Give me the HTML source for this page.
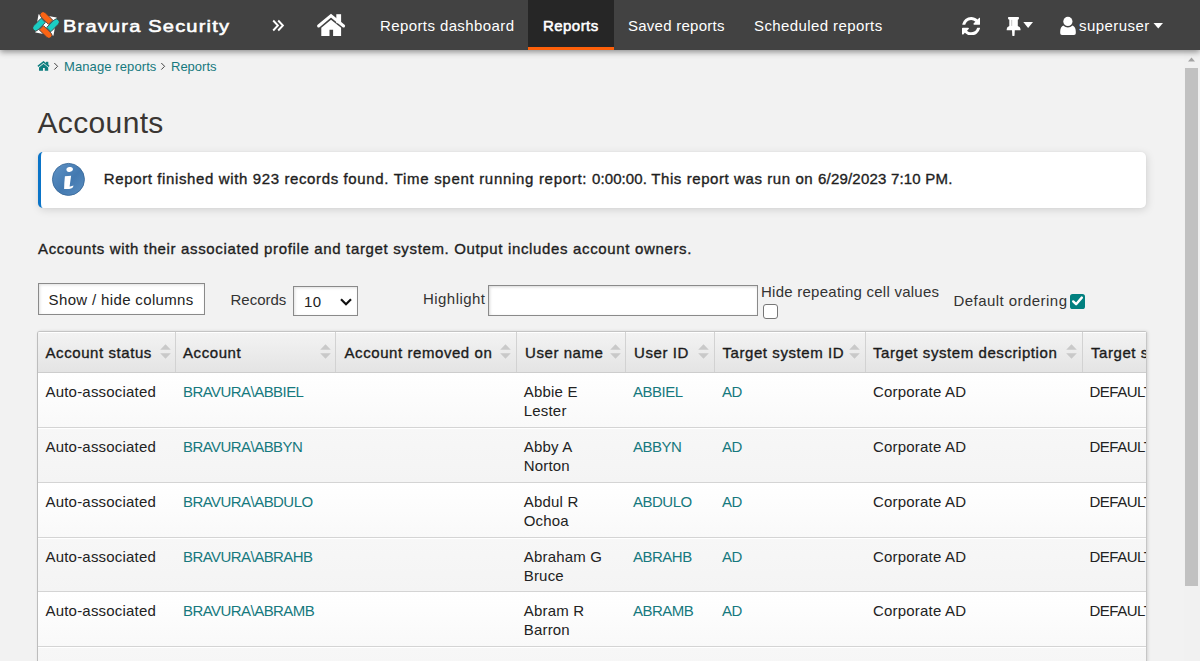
<!DOCTYPE html>
<html><head><meta charset="utf-8">
<style>
*{box-sizing:border-box;}
html,body{margin:0;padding:0;}
body{width:1200px;height:661px;overflow:hidden;position:relative;background:#f2f2f2;font-family:"Liberation Sans",sans-serif;color:#222;}
.a{position:absolute;white-space:nowrap;}
#nav{position:absolute;left:0;top:0;width:1200px;height:50px;background:#424242;box-shadow:0 2px 6px rgba(0,0,0,.42);z-index:5;}
.nt{position:absolute;top:16px;line-height:20px;font-size:15px;color:#fff;letter-spacing:.4px;white-space:nowrap;}
#act{position:absolute;left:528px;top:0;width:86px;height:50px;background:#262626;border-bottom:3px solid #fc600a;}
.t15{font-size:15px;line-height:20px;}
.link{color:#16797e;}
#sb{position:absolute;left:1184px;top:50px;width:16px;height:611px;background:#f1f1f1;z-index:3;}
#thumb{position:absolute;left:1px;top:18px;width:13px;height:518px;background:#c1c1c1;}
#tbl{position:absolute;left:37px;top:331px;width:1110px;height:340px;overflow:hidden;border-left:1px solid #bdbdbd;border-right:1px solid #c6c6c6;border-top:1px solid #c4c4c4;border-radius:3px 2px 0 0;box-shadow:1px 0 3px rgba(0,0,0,.12);}
.hd{position:absolute;left:0;top:0;width:1200px;height:41px;background:linear-gradient(#f3f3f3,#e4e4e4);border-bottom:1px solid #cdcdcd;box-shadow:inset 0 1px 0 #fff;}
.ht{position:absolute;top:10.5px;font-size:15px;line-height:20px;color:#1b1b1b;letter-spacing:.57px;-webkit-text-stroke:.35px #1b1b1b;white-space:nowrap;}
.sep{position:absolute;top:0;width:1px;height:40px;background:#d2d2d2;}
.row{position:absolute;left:0;width:1200px;height:55px;border-bottom:1px solid #d4d4d4;}
.odd{background:linear-gradient(#ffffff,#f9f9f9);}
.even{background:linear-gradient(#f7f7f7,#f4f4f4);box-shadow:inset 0 1px 0 #fff;}
.ct{position:absolute;font-size:15px;line-height:19px;color:#222;white-space:nowrap;letter-spacing:.2px;}
.si{position:absolute;top:12px;}
.ct{top:9px;}
.ct.link{color:#16797e;}
.info{top:169px;color:#1e1e1e;-webkit-text-stroke:.35px #1e1e1e;}
</style></head>
<body>
<div id="nav">
  <!-- logo -->
  <svg class="a" style="left:33.3px;top:12.3px" width="26" height="26" viewBox="0 0 26 26">
   <g transform="translate(13 13)">
    <rect x="-9.2" y="-9.2" width="18.4" height="18.4" fill="#fff" transform="rotate(10)"/>
    <g transform="rotate(45)" stroke="#424242" stroke-width="0.9">
     <path fill="#fa6414" d="M1.3 -8.2 H-9.4 A3 3 0 0 0 -9.4 -2.2 H1.3 Z"/>
     <path fill="#fa6414" d="M-1.3 8.2 H9.4 A3 3 0 0 0 9.4 2.2 H-1.3 Z"/>
     <path fill="#1bcdc3" d="M-8.2 -1.3 V9.4 A3 3 0 0 0 -2.2 9.4 V-1.3 Z"/>
     <path fill="#1bcdc3" d="M8.2 1.3 V-9.4 A3 3 0 0 0 2.2 -9.4 V1.3 Z"/>
    </g>
   </g>
  </svg>
  <div class="a" style="left:62.8px;top:15.5px;font-size:17px;line-height:22px;color:#fff;letter-spacing:1px;-webkit-text-stroke:0.55px #fff;transform:scaleX(1.18);transform-origin:0 0;">Bravura Security</div>
  <!-- chevrons -->
  <svg class="a" style="left:270px;top:17px" width="18" height="16" viewBox="0 0 18 16">
    <path d="M3.2 3.5 L7.9 8.5 L3.2 13.5 M8.2 3.5 L12.9 8.5 L8.2 13.5" fill="none" stroke="#fff" stroke-width="1.9"/>
  </svg>
  <!-- home -->
  <svg class="a" style="left:315px;top:12px" width="32" height="26" viewBox="315 12 32 26">
    <rect x="336.3" y="14.2" width="4.8" height="9" fill="#fff"/>
    <path d="M318.6 26 L331 15.7 L343.6 26" fill="none" stroke="#fff" stroke-width="3" stroke-linecap="round"/>
    <path d="M321.3 27.7 L331 19.8 L341.1 27.7 L341.1 36.1 L333.1 36.1 L333.1 29.8 L329.5 29.8 L329.5 36.1 L321.3 36.1 Z" fill="#fff"/>
  </svg>
  <div class="nt" style="left:380px;">Reports dashboard</div>
  <div id="act"></div>
  <div class="nt" style="left:543px;letter-spacing:.45px;-webkit-text-stroke:.55px #fff;">Reports</div>
  <div class="nt" style="left:628px;letter-spacing:.25px;">Saved reports</div>
  <div class="nt" style="left:754px;">Scheduled reports</div>
  <!-- refresh -->
  <svg class="a" style="left:961.7px;top:16.5px" width="18.4" height="18.4" viewBox="0 128 1536 1536" preserveAspectRatio="none"><path fill="#fff" d="M1511 1056q0 5-1 7-64 268-268 434.500t-478 166.500q-146 0-282.500-55t-243.500-157l-129 129q-19 19-45 19t-45-19-19-45v-448q0-26 19-45t45-19h448q26 0 45 19t19 45-19 45l-137 137q71 66 161 102t187 36q134 0 250-65t186-179q11-17 53-117 8-23 30-23h192q13 0 22.500 9.500t9.500 22.500zm25-800v448q0 26-19 45t-45 19h-448q-26 0-45-19t-19-45 19-45l138-138q-148-137-349-137-134 0-250 65t-186 179q-11 17-53 117-8 23-30 23h-199q-13 0-22.500-9.500t-9.500-22.500v-7q65-268 270-434.500t480-166.500q146 0 284 55.500t245 156.500l130-129q19-19 45-19t45 19 19 45z"/></svg>
  <!-- pin -->
  <svg class="a" style="left:1005px;top:15px" width="30" height="23" viewBox="1005 15 30 23">
 <path fill="#fff" d="M1008.6 16.9 H1018.3 Q1019 16.9 1019 18.3 Q1019 19.7 1017.8 19.7 V26 Q1020.5 27 1020.5 29 V30.3 H1014.8 L1014.5 35.8 Q1013.4 36.4 1012.3 35.8 L1012 30.3 H1006.7 V29 Q1006.7 27 1009.3 26 V19.7 Q1008 19.7 1008 18.3 Q1008 16.9 1008.6 16.9 Z"/>
 <rect x="1011.2" y="19.9" width="1" height="6" fill="#424242" opacity=".3"/>
 <path fill="#fff" d="M1023.3 22 H1033 L1028.15 28 Z"/>
</svg>
  <!-- user -->
  <svg class="a" style="left:1059px;top:15px" width="18" height="22" viewBox="1059 15 18 22">
 <circle cx="1067.9" cy="21.4" r="4.6" fill="#fff"/>
 <path fill="#fff" d="M1063.2 25.6 Q1065.5 27.6 1067.9 27.6 Q1070.3 27.6 1072.6 25.6 Q1075.8 27.2 1075.8 31.5 V33.3 Q1075.8 35 1074 35 H1062 Q1060.2 35 1060.2 33.3 V31.5 Q1060.2 27.2 1063.2 25.6 Z"/>
</svg>
<svg class="a" style="left:1152px;top:21px" width="12" height="9" viewBox="1152 21 12 9"><path fill="#fff" d="M1153.5 23 H1163 L1158.25 28.6 Z"/></svg>
  <div class="nt" style="left:1079px;letter-spacing:.45px;">superuser</div>
</div>

<div id="sb"><svg style="position:absolute;left:3px;top:6.8px" width="9" height="6" viewBox="0 0 9 6"><path d="M4.5 0.5 L8 4.5 L1 4.5 Z" fill="#a3a3a3"/></svg><div id="thumb"></div></div>

<!-- breadcrumb -->
<svg class="a" style="left:37px;top:61px" width="13" height="11" viewBox="0 0 13 11"><path d="M0.9 5.4 L6.5 0.9 L12.1 5.4" fill="none" stroke="#0e7f80" stroke-width="1.5"/><rect x="9" y="0.8" width="2.3" height="3.4" fill="#0e7f80"/><path fill="#0e7f80" d="M2 6.4 L6.5 2.7 L11.2 6.4 V9.8 H7.8 V7 H6 V9.8 H2 Z"/></svg>
<svg class="a" style="left:53px;top:62px" width="6" height="9" viewBox="0 0 6 9"><path d="M1.3 1 L4.6 4.3 L1.3 7.6" fill="none" stroke="#3a3a3a" stroke-width="0.95"/></svg>
<svg class="a" style="left:160px;top:62px" width="6" height="9" viewBox="0 0 6 9"><path d="M1.3 1 L4.6 4.3 L1.3 7.6" fill="none" stroke="#3a3a3a" stroke-width="0.95"/></svg>

<div class="a link" style="left:64px;top:57.7px;font-size:13px;line-height:18px;letter-spacing:.1px;">Manage reports</div>
<div class="a link" style="left:171px;top:57.7px;font-size:13px;line-height:18px;">Reports</div>

<div class="a" style="left:37.5px;top:105px;font-size:30px;line-height:36px;color:#3a3633;letter-spacing:.35px;">Accounts</div>

<div class="a" style="left:38px;top:152px;width:1108px;height:56px;background:#fff;border-left:3px solid #0a74c8;border-radius:5px;box-shadow:1px 2px 8px rgba(0,0,0,.13),0 0 2px rgba(0,0,0,.06);"></div>
<svg class="a" style="left:51px;top:162px" width="35" height="35" viewBox="51 162 35 35">
 <defs><linearGradient id="ig" x1="0" y1="0" x2="1" y2="1"><stop offset="0" stop-color="#5f93c6"/><stop offset=".55" stop-color="#4379b0"/><stop offset="1" stop-color="#5b8fc2"/></linearGradient></defs>
 <circle cx="68.45" cy="179.4" r="16" fill="url(#ig)" stroke="#3a6a9a" stroke-width="0.9"/>
 <ellipse cx="69.7" cy="169.4" rx="3.3" ry="2.4" fill="#fff" transform="rotate(-15 69.8 169.5)"/>
 <path fill="#fff" d="M64.9 176.3 L71.1 175.7 L69.6 186.4 Q71.7 186.6 73.5 185.6 Q73 188.7 69.2 189 L64.1 189 Q64.2 183 64.9 176.3 Z"/>
</svg>
<div class="a t15 info" style="left:103.8px;letter-spacing:0.62px;">Report finished with 923 records found.</div>
<div class="a t15 info" style="left:393.75px;letter-spacing:0.693px;">Time spent running report:</div>
<div class="a t15 info" style="left:592px;letter-spacing:0.101px;">0:00:00.</div>
<div class="a t15 info" style="left:651.3px;letter-spacing:0.578px;">This report was run on</div>
<div class="a t15 info" style="left:818px;letter-spacing:0.198px;">6/29/2023 7:10 PM.</div>

<div class="a t15" style="left:38px;top:239px;color:#1e1e1e;letter-spacing:.65px;-webkit-text-stroke:.35px #1e1e1e;">Accounts with their associated profile and target system. Output includes account owners.</div>


<!-- controls -->
<div class="a" style="left:38px;top:283px;width:167px;height:32px;background:#fff;border:1px solid #8a8a8a;box-shadow:inset 1px 1px 3px rgba(0,0,0,.12);"></div>
<div class="a t15" style="left:48.6px;top:290px;color:#222;letter-spacing:.35px;">Show / hide columns</div>
<div class="a t15" style="left:230.5px;top:290px;color:#333;">Records</div>
<div class="a" style="left:293px;top:286px;width:65px;height:30px;background:#fff;border:1px solid #8a8a8a;box-shadow:inset 1px 1px 3px rgba(0,0,0,.12);"></div>
<div class="a t15" style="left:304px;top:291.5px;color:#222;letter-spacing:.5px;">10</div>
<svg class="a" style="left:339px;top:296.7px" width="14" height="10" viewBox="0 0 14 10"><path d="M2 2.2 L7 7.2 L12 2.2" fill="none" stroke="#111" stroke-width="2.2"/></svg>
<div class="a t15" style="left:423px;top:289px;color:#333;letter-spacing:.45px;">Highlight</div>
<div class="a" style="left:488px;top:285px;width:270px;height:31px;background:#fff;border:1px solid #8a8a8a;box-shadow:inset 1px 1px 3px rgba(0,0,0,.16);"></div>
<div class="a t15" style="left:761px;top:282.3px;color:#333;letter-spacing:.25px;">Hide repeating cell values</div>
<div class="a" style="left:763px;top:304px;width:15px;height:14.5px;background:#fff;border:1px solid #767676;border-radius:3px;"></div>
<div class="a t15" style="left:953.5px;top:291.3px;color:#333;letter-spacing:.45px;">Default ordering</div>
<svg class="a" style="left:1069.8px;top:293.9px" width="15" height="15" viewBox="0 0 15 15"><rect x="0" y="0" width="15" height="15" rx="2.6" fill="#02807f"/><path d="M3.2 7.4 L6.1 10.2 L11.8 3.6" fill="none" stroke="#fff" stroke-width="2.4" stroke-linecap="round" stroke-linejoin="round"/></svg>

<div id="tbl">
<div class="hd">
<div class="ht" style="left:7.5px">Account status</div>
<svg class="si" style="left:121.5px" width="11" height="15" viewBox="0 0 11 15"><path d="M5.5 0.3 L10.8 5.8 L0.2 5.8 Z M5.5 14.7 L10.8 9.2 L0.2 9.2 Z" fill="#c9c9c9"/></svg>
<div class="sep" style="left:137.0px"></div>
<div class="ht" style="left:145.0px">Account</div>
<svg class="si" style="left:281.5px" width="11" height="15" viewBox="0 0 11 15"><path d="M5.5 0.3 L10.8 5.8 L0.2 5.8 Z M5.5 14.7 L10.8 9.2 L0.2 9.2 Z" fill="#c9c9c9"/></svg>
<div class="sep" style="left:297.0px"></div>
<div class="ht" style="left:306.5px">Account removed on</div>
<svg class="si" style="left:462.3px" width="11" height="15" viewBox="0 0 11 15"><path d="M5.5 0.3 L10.8 5.8 L0.2 5.8 Z M5.5 14.7 L10.8 9.2 L0.2 9.2 Z" fill="#c9c9c9"/></svg>
<div class="sep" style="left:478.0px"></div>
<div class="ht" style="left:487.0px">User name</div>
<svg class="si" style="left:572.0px" width="11" height="15" viewBox="0 0 11 15"><path d="M5.5 0.3 L10.8 5.8 L0.2 5.8 Z M5.5 14.7 L10.8 9.2 L0.2 9.2 Z" fill="#c9c9c9"/></svg>
<div class="sep" style="left:587.0px"></div>
<div class="ht" style="left:596.0px">User ID</div>
<svg class="si" style="left:660.0px" width="11" height="15" viewBox="0 0 11 15"><path d="M5.5 0.3 L10.8 5.8 L0.2 5.8 Z M5.5 14.7 L10.8 9.2 L0.2 9.2 Z" fill="#c9c9c9"/></svg>
<div class="sep" style="left:676.0px"></div>
<div class="ht" style="left:684.5px">Target system ID</div>
<svg class="si" style="left:811.3px" width="11" height="15" viewBox="0 0 11 15"><path d="M5.5 0.3 L10.8 5.8 L0.2 5.8 Z M5.5 14.7 L10.8 9.2 L0.2 9.2 Z" fill="#c9c9c9"/></svg>
<div class="sep" style="left:827.0px"></div>
<div class="ht" style="left:835.0px">Target system description</div>
<svg class="si" style="left:1028.0px" width="11" height="15" viewBox="0 0 11 15"><path d="M5.5 0.3 L10.8 5.8 L0.2 5.8 Z M5.5 14.7 L10.8 9.2 L0.2 9.2 Z" fill="#c9c9c9"/></svg>
<div class="sep" style="left:1044.0px"></div>
<div class="ht" style="left:1053.0px">Target system</div>
</div>
<div class="row odd" style="top:41.00px;height:54.86px">
<div class="ct" style="left:7.5px">Auto-associated</div>
<div class="ct link" style="left:145.0px;letter-spacing:-0.55px">BRAVURA\ABBIEL</div>
<div class="ct" style="left:485.7px">Abbie E<br>Lester</div>
<div class="ct link" style="left:595.0px;letter-spacing:-0.5px">ABBIEL</div>
<div class="ct link" style="left:684.0px;letter-spacing:-0.5px">AD</div>
<div class="ct" style="left:835.0px">Corporate AD</div>
<div class="ct" style="left:1051.5px;letter-spacing:-0.5px">DEFAULT</div>
</div>
<div class="row even" style="top:95.85px;height:54.86px">
<div class="ct" style="left:7.5px">Auto-associated</div>
<div class="ct link" style="left:145.0px;letter-spacing:-0.55px">BRAVURA\ABBYN</div>
<div class="ct" style="left:485.7px">Abby A<br>Norton</div>
<div class="ct link" style="left:595.0px;letter-spacing:-0.5px">ABBYN</div>
<div class="ct link" style="left:684.0px;letter-spacing:-0.5px">AD</div>
<div class="ct" style="left:835.0px">Corporate AD</div>
<div class="ct" style="left:1051.5px;letter-spacing:-0.5px">DEFAULT</div>
</div>
<div class="row odd" style="top:150.70px;height:54.86px">
<div class="ct" style="left:7.5px">Auto-associated</div>
<div class="ct link" style="left:145.0px;letter-spacing:-0.55px">BRAVURA\ABDULO</div>
<div class="ct" style="left:485.7px">Abdul R<br>Ochoa</div>
<div class="ct link" style="left:595.0px;letter-spacing:-0.5px">ABDULO</div>
<div class="ct link" style="left:684.0px;letter-spacing:-0.5px">AD</div>
<div class="ct" style="left:835.0px">Corporate AD</div>
<div class="ct" style="left:1051.5px;letter-spacing:-0.5px">DEFAULT</div>
</div>
<div class="row even" style="top:205.55px;height:54.86px">
<div class="ct" style="left:7.5px">Auto-associated</div>
<div class="ct link" style="left:145.0px;letter-spacing:-0.55px">BRAVURA\ABRAHB</div>
<div class="ct" style="left:485.7px">Abraham G<br>Bruce</div>
<div class="ct link" style="left:595.0px;letter-spacing:-0.5px">ABRAHB</div>
<div class="ct link" style="left:684.0px;letter-spacing:-0.5px">AD</div>
<div class="ct" style="left:835.0px">Corporate AD</div>
<div class="ct" style="left:1051.5px;letter-spacing:-0.5px">DEFAULT</div>
</div>
<div class="row odd" style="top:260.40px;height:54.86px">
<div class="ct" style="left:7.5px">Auto-associated</div>
<div class="ct link" style="left:145.0px;letter-spacing:-0.55px">BRAVURA\ABRAMB</div>
<div class="ct" style="left:485.7px">Abram R<br>Barron</div>
<div class="ct link" style="left:595.0px;letter-spacing:-0.5px">ABRAMB</div>
<div class="ct link" style="left:684.0px;letter-spacing:-0.5px">AD</div>
<div class="ct" style="left:835.0px">Corporate AD</div>
<div class="ct" style="left:1051.5px;letter-spacing:-0.5px">DEFAULT</div>
</div>
<div class="row even" style="top:315.25px;height:54.86px">
<div class="ct" style="left:7.5px;top:10px">Auto-associated</div>
<div class="ct link" style="left:145.0px;letter-spacing:-0.55px;top:10px">BRAVURA\ABRAMT</div>
<div class="ct" style="left:485.7px;top:10px">Abram T<br>Tate</div>
<div class="ct link" style="left:595.0px;letter-spacing:-0.5px;top:10px">ABRAMT</div>
<div class="ct link" style="left:684.0px;letter-spacing:-0.5px;top:10px">AD</div>
<div class="ct" style="left:835.0px;top:10px">Corporate AD</div>
<div class="ct" style="left:1051.5px;letter-spacing:-0.5px;top:10px">DEFAULT</div>
</div>
</div>
</body></html>
